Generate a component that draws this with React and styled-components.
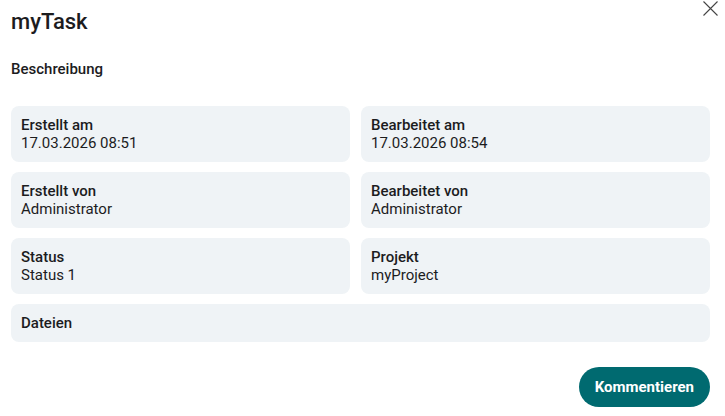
import React from "react";
import styled, { createGlobalStyle } from "styled-components";

const GlobalStyle = createGlobalStyle`
  body {
    margin: 0;
    background: #ffffff;
    font-family: Roboto, "Liberation Sans", Arial, sans-serif;
    color: #1d1d1f;
  }
`;

const Dialog = styled.div`
  position: relative;
  width: 725px;
  height: 416px;
  box-sizing: border-box;
  padding: 8px 15px 0 11px;
`;

const Title = styled.h1`
  margin: 0;
  font-size: 22px;
  line-height: 28px;
  font-weight: 500;
  color: #1c1c1e;
`;

const CloseButton = styled.button`
  position: absolute;
  top: 1px;
  right: 7px;
  width: 15px;
  height: 15px;
  padding: 0;
  border: none;
  background: none;
  cursor: pointer;
  display: flex;
`;

const Section = styled.h2`
  margin: 24px 0 0;
  font-size: 15px;
  line-height: 18px;
  font-weight: 500;
  color: #1c1c1e;
`;

const Grid = styled.div`
  display: grid;
  grid-template-columns: 339px 349px;
  column-gap: 11px;
  row-gap: 10px;
  margin-top: 28px;
`;

const Card = styled.div`
  grid-column: ${(p) => (p.$wide ? "1 / -1" : "auto")};
  background: #eff3f6;
  border-radius: 8px;
  padding: 10px;
  font-size: 15px;
  line-height: 18px;
`;

const Label = styled.div`
  font-weight: 500;
  color: #1c1c1e;
`;

const Value = styled.div`
  font-weight: 400;
  color: #1c1c1e;
`;

const Footer = styled.div`
  display: flex;
  justify-content: flex-end;
  margin-top: 25px;
`;

const PrimaryButton = styled.button`
  height: 40px;
  padding: 0 16px;
  border: none;
  border-radius: 20px;
  background: #006a70;
  color: #ffffff;
  font-family: Roboto, "Liberation Sans", Arial, sans-serif;
  font-size: 15px;
  font-weight: 700;
  cursor: pointer;
`;

const fields = [
  ["Erstellt am", "17.03.2026 08:51"],
  ["Bearbeitet am", "17.03.2026 08:54"],
  ["Erstellt von", "Administrator"],
  ["Bearbeitet von", "Administrator"],
  ["Status", "Status 1"],
  ["Projekt", "myProject"],
];

export default function App() {
  return (
    <>
      <GlobalStyle />
      <Dialog>
        <Title>myTask</Title>
        <CloseButton aria-label="Schließen">
          <svg width="15" height="15" viewBox="0 0 15 15">
            <path d="M0.5 0.5 L14.5 14.5 M14.5 0.5 L0.5 14.5" stroke="#444" strokeWidth="1.1" fill="none" />
          </svg>
        </CloseButton>
        <Section>Beschreibung</Section>
        <Grid>
          {fields.map(([label, value]) => (
            <Card key={label}>
              <Label>{label}</Label>
              <Value>{value}</Value>
            </Card>
          ))}
          <Card $wide>
            <Label>Dateien</Label>
          </Card>
        </Grid>
        <Footer>
          <PrimaryButton>Kommentieren</PrimaryButton>
        </Footer>
      </Dialog>
    </>
  );
}
